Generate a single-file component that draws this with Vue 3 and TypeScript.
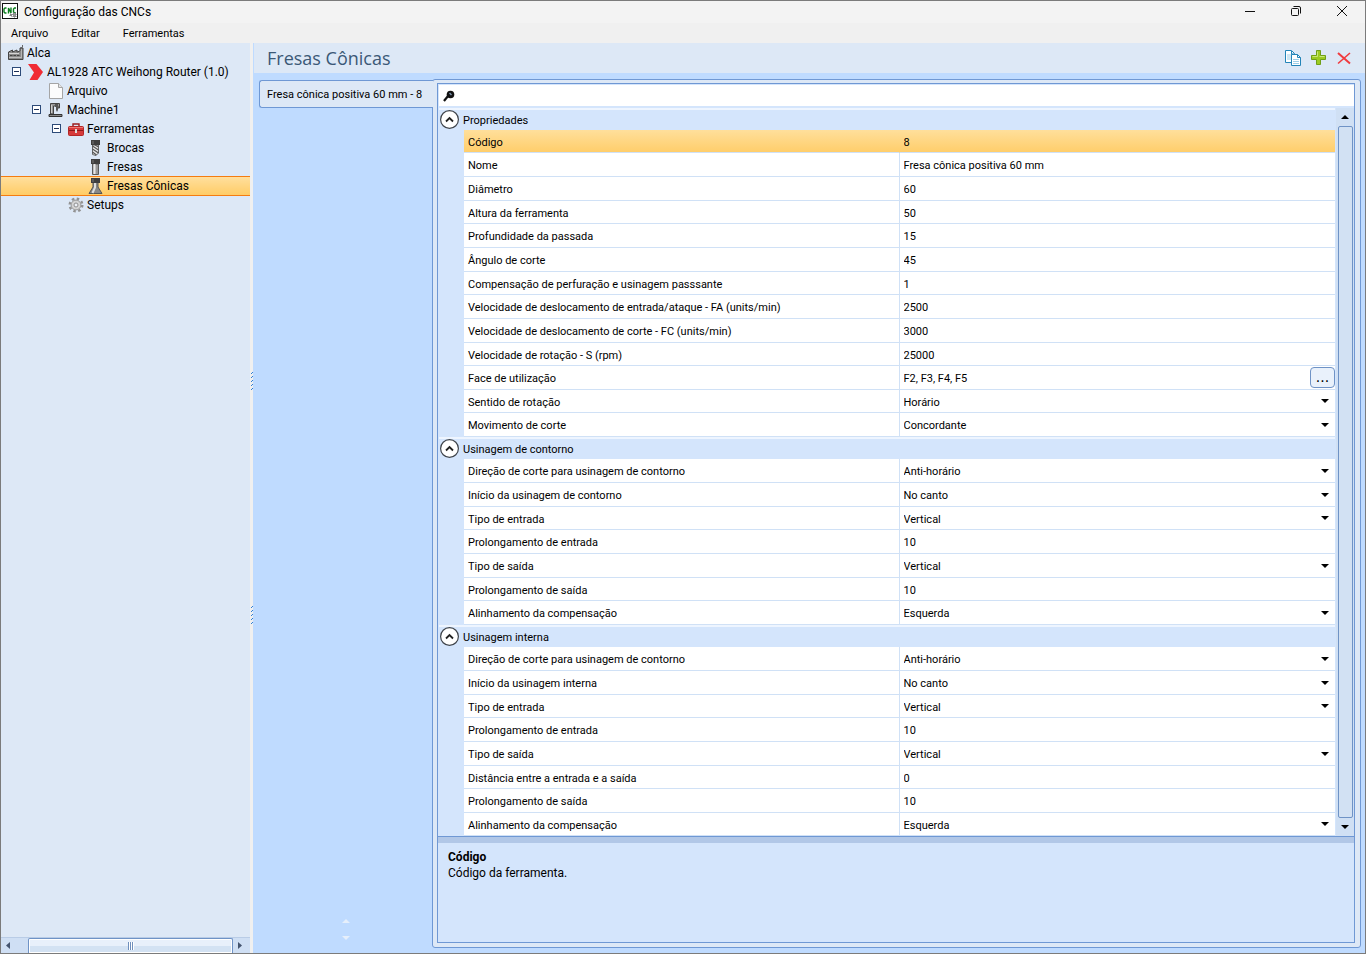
<script setup lang="ts">
import { ref } from 'vue'

interface Row {
  id: string
  label: string
  value: string
  kind?: 'select' | 'browse'
  short?: boolean
}
interface Group {
  title: string
  rows: Row[]
}
interface TreeNode {
  label: string
  icon: string
  level: number
  toggle?: boolean
}

const tree: TreeNode[] = [
  { label: 'Alca', icon: 'factory', level: 0 },
  { label: 'AL1928 ATC Weihong Router (1.0)', icon: 'brand', level: 1, toggle: true },
  { label: 'Arquivo', icon: 'file', level: 2 },
  { label: 'Machine1', icon: 'machine', level: 2, toggle: true },
  { label: 'Ferramentas', icon: 'toolbox', level: 3, toggle: true },
  { label: 'Brocas', icon: 'drill', level: 4 },
  { label: 'Fresas', icon: 'mill', level: 4 },
  { label: 'Fresas Cônicas', icon: 'cone', level: 4 },
  { label: 'Setups', icon: 'gear', level: 3 },
]

const selectedNode = ref(7)
const selectedRow = ref('codigo')

const groups = ref<Group[]>([
  {
    title: 'Propriedades',
    rows: [
      { id: 'codigo', label: 'Código', value: '8', short: true },
      { id: 'nome', label: 'Nome', value: 'Fresa cônica positiva 60 mm' },
      { id: 'diametro', label: 'Diâmetro', value: '60' },
      { id: 'altura', label: 'Altura da ferramenta', value: '50', short: true },
      { id: 'profundidade', label: 'Profundidade da passada', value: '15' },
      { id: 'angulo', label: 'Ângulo de corte', value: '45' },
      { id: 'compensacao', label: 'Compensação de perfuração e usinagem passsante', value: '1', short: true },
      { id: 'fa', label: 'Velocidade de deslocamento de entrada/ataque - FA (units/min)', value: '2500' },
      { id: 'fc', label: 'Velocidade de deslocamento de corte - FC (units/min)', value: '3000' },
      { id: 'rpm', label: 'Velocidade de rotação - S (rpm)', value: '25000', short: true },
      { id: 'face', label: 'Face de utilização', value: 'F2, F3, F4, F5', kind: 'browse' },
      { id: 'sentido', label: 'Sentido de rotação', value: 'Horário', kind: 'select', short: true },
      { id: 'movimento', label: 'Movimento de corte', value: 'Concordante', kind: 'select' },
    ],
  },
  {
    title: 'Usinagem de contorno',
    rows: [
      { id: 'c-direcao', label: 'Direção de corte para usinagem de contorno', value: 'Anti-horário', kind: 'select' },
      { id: 'c-inicio', label: 'Início da usinagem de contorno', value: 'No canto', kind: 'select' },
      { id: 'c-entrada', label: 'Tipo de entrada', value: 'Vertical', kind: 'select', short: true },
      { id: 'c-pentrada', label: 'Prolongamento de entrada', value: '10' },
      { id: 'c-saida', label: 'Tipo de saída', value: 'Vertical', kind: 'select' },
      { id: 'c-psaida', label: 'Prolongamento de saída', value: '10', short: true },
      { id: 'c-alinhamento', label: 'Alinhamento da compensação', value: 'Esquerda', kind: 'select' },
    ],
  },
  {
    title: 'Usinagem interna',
    rows: [
      { id: 'i-direcao', label: 'Direção de corte para usinagem de contorno', value: 'Anti-horário', kind: 'select' },
      { id: 'i-inicio', label: 'Início da usinagem interna', value: 'No canto', kind: 'select' },
      { id: 'i-entrada', label: 'Tipo de entrada', value: 'Vertical', kind: 'select', short: true },
      { id: 'i-pentrada', label: 'Prolongamento de entrada', value: '10' },
      { id: 'i-saida', label: 'Tipo de saída', value: 'Vertical', kind: 'select' },
      { id: 'i-distancia', label: 'Distância entre a entrada e a saída', value: '0', short: true },
      { id: 'i-psaida', label: 'Prolongamento de saída', value: '10' },
      { id: 'i-alinhamento', label: 'Alinhamento da compensação', value: 'Esquerda', kind: 'select', short: true },
    ],
  },
])
</script>

<template>
  <div class="window">
    <header class="titlebar">
      <svg class="app-icon" width="16" height="16" viewBox="0 0 16 16" aria-hidden="true">
        <rect x=".5" y=".5" width="15" height="15" fill="#fff" stroke="#111" />
        <path d="M4.500 5H3L2 6v3l1 1h1.500M6.500 10.500V5l2.500 5V4.500M14 5h-1.500l-1 1v3l1 1H14" fill="none" stroke="#0a7d1c" stroke-width="1.400" />
        <path d="M8 11h2v2H8zM11 10h3v4h-3z" fill="#999" stroke="#777" stroke-dasharray="1 1" />
      </svg>
      <span class="title">Configuração das CNCs</span>
      <div class="window-buttons">
        <button type="button" aria-label="Minimizar">
          <svg width="12" height="12" viewBox="0 0 12 12"><path d="M1 6.500h10" /></svg>
        </button>
        <button type="button" aria-label="Restaurar">
          <svg width="12" height="12" viewBox="0 0 12 12">
            <rect x="1.500" y="3.500" width="7" height="7" rx="1" />
            <path d="M3.500 1.500H9a1.500 1.500 0 0 1 1.500 1.500v5.500" />
          </svg>
        </button>
        <button type="button" aria-label="Fechar">
          <svg width="12" height="12" viewBox="0 0 12 12"><path d="M1 1l10 10M11 1L1 11" /></svg>
        </button>
      </div>
    </header>

    <nav class="menubar">
      <button type="button">Arquivo</button>
      <button type="button">Editar</button>
      <button type="button">Ferramentas</button>
    </nav>

    <div class="workspace">
      <aside class="sidebar">
        <ul class="tree" role="tree">
          <li
            v-for="(node, i) in tree"
            :key="node.label"
            role="treeitem"
            :aria-selected="selectedNode === i"
            :class="['node', 'level-' + node.level, { selected: selectedNode === i }]"
            @click="selectedNode = i"
          >
            <span class="toggle-slot">
              <button v-if="node.toggle" type="button" class="toggle" :aria-label="'Recolher ' + node.label">
                <svg width="9" height="9" viewBox="0 0 9 9">
                  <rect x=".5" y=".5" width="8" height="8" fill="#fff" stroke="#2c4a78" />
                  <path d="M2 4.500h5" stroke="#1b2f57" />
                </svg>
              </button>
            </span>
            <svg class="node-icon" width="16" height="16" viewBox="0 0 16 16" aria-hidden="true">
              <g v-if="node.icon === 'factory'">
                <path d="M.5 14.500V7L4.500 5v2L9 5v2l3-1V3h3v11.500z" fill="#8a8a8a" stroke="#444" />
                <path d="M1 8.500h10" stroke="#d5d5d5" />
                <path d="M2 10.500h2.500M5.500 10.500H8M9 10.500h2.500" stroke="#444" />
                <path d="M1 12.500h13" stroke="#bdbdbd" />
                <path d="M13.500 4v9" stroke="#b5b5b5" />
                <path d="M14.500 2V0M12.500 2.500h2" stroke="#666" />
              </g>
              <path v-else-if="node.icon === 'brand'" d="M0 0h8.500L15 8l-5.500 8H1.500l4.500-7.500z" fill="#f02c34" />
              <g v-else-if="node.icon === 'file'">
                <path d="M1.500.5h9l4 4v11h-13z" fill="#fcfcfc" stroke="#a5a5a5" />
                <path d="M10.500.5v4h4" fill="#e6e6e6" stroke="#a5a5a5" />
              </g>
              <g v-else-if="node.icon === 'machine'">
                <path d="M2.500 12V1.500h9V6H10V4H5.500v8z" fill="#999" stroke="#444" />
                <path d="M3.500 3v8" stroke="#ccc" />
                <path d="M7 2h3v6l-1 2-1-2V5H7z" fill="#555" />
                <path d="M1 12.500h13v2H1z" fill="#8a8a8a" stroke="#333" />
              </g>
              <g v-else-if="node.icon === 'toolbox'">
                <path d="M5 5.500V3h6v2.500" fill="none" stroke="#9b1c1c" stroke-width="1.400" />
                <rect x=".5" y="5.500" width="15" height="9" rx="1" fill="#d63a3a" stroke="#b32626" />
                <path d="M1 9.500h14" stroke="#8c1717" />
                <path d="M1 6.500h14" stroke="#ee7772" />
                <rect x="7" y="8" width="2" height="4" fill="#ddd" />
              </g>
              <g v-else-if="node.icon === 'drill'">
                <path d="M4.500 5h6v8L8 15.500l-3.500-1z" fill="#e6e6e6" stroke="#666" />
                <path d="M4.500 6l6 4M4.500 9l6 4M4.500 12l4 3M7 5l3.500 2" stroke="#555" stroke-width="1.100" />
                <path d="M3 0h9v5H3z" fill="#3f3f3f" />
                <path d="M5 1v3" stroke="#777" />
              </g>
              <g v-else-if="node.icon === 'mill'">
                <path d="M4.500 5h6v10.500h-6z" fill="#999" stroke="#5a5a5a" />
                <path d="M6.500 5v10" stroke="#e8e8e8" stroke-width="2" />
                <path d="M3 0h9v5H3z" fill="#3f3f3f" />
                <path d="M5 1v3" stroke="#777" />
              </g>
              <g v-else-if="node.icon === 'cone'">
                <path d="M5 4h5v5l4 6.500H1L5 9z" fill="#888" stroke="#555" />
                <path d="M7 5v4.500L4.500 15" stroke="#dedede" stroke-width="2" fill="none" />
                <path d="M3 0h9v5H3z" fill="#3f3f3f" />
                <path d="M5 1v3" stroke="#777" />
              </g>
              <g v-else fill="none">
                <circle cx="8" cy="8" r="6.300" stroke="#929292" stroke-width="2.400" stroke-dasharray="2.474 2.474" />
                <circle cx="8" cy="8" r="4.900" fill="#d4d4d4" stroke="#9a9a9a" />
                <circle cx="8" cy="8" r="2" fill="#eef2f8" stroke="#8f8f8f" />
              </g>
            </svg>
            <span class="node-label">{{ node.label }}</span>
          </li>
        </ul>
        <div class="hscroll">
          <button type="button" class="hs-arrow" aria-label="Rolar à esquerda">
            <svg width="4" height="7" viewBox="0 0 4 7"><path d="M4 0v7L0 3.500z" fill="#44546f" /></svg>
          </button>
          <div class="hs-thumb"><i></i><i></i><i></i></div>
          <button type="button" class="hs-arrow right" aria-label="Rolar à direita">
            <svg width="4" height="7" viewBox="0 0 4 7"><path d="M0 0v7l4-3.500z" fill="#44546f" /></svg>
          </button>
        </div>
      </aside>

      <div class="splitter">
        <svg v-for="n in 2" :key="n" width="3" height="19" viewBox="0 0 3 19" aria-hidden="true">
          <path
            v-for="k in 5"
            :key="k"
            :d="`M1 ${k * 4 - 3}h1v1h-1zM2 ${k * 4 - 4}h1v1h-1z`"
            fill="#2f7fd8"
          />
        </svg>
      </div>

      <main class="content">
        <div class="content-head">
          <h1>Fresas Cônicas</h1>
          <div class="tools">
            <button type="button" aria-label="Copiar">
              <svg width="17" height="16" viewBox="0 0 17 16">
                <path d="M.5.500h6l3 3v9h-9z" fill="#fff" stroke="#2384b8" />
                <path d="M2 5h5M2 7h5M2 9h5" stroke="#9fcfe8" />
                <path d="M6.500 4.500h6l3 3v8h-9z" fill="#fff" stroke="#2384b8" />
                <path d="M12.500 4.500v3h3M6.500 1v3h3" fill="none" stroke="#2384b8" />
                <path d="M8 9.500h6M8 11.500h6M8 13.500h6" stroke="#9fcfe8" />
              </svg>
            </button>
            <button type="button" aria-label="Adicionar">
              <svg width="16" height="16" viewBox="0 0 16 16">
                <path d="M5.500.5h4v5h5v4h-5v5h-4v-5h-5v-4h5z" fill="#9ccb22" stroke="#6f9f17" />
                <path d="M6.500 1.500v5h-5M8.500 6.500h5" fill="none" stroke="#c9e77a" />
              </svg>
            </button>
            <button type="button" aria-label="Excluir">
              <svg width="16" height="16" viewBox="0 0 16 16">
                <path d="M2 3l12 10.500" stroke="#f03a3e" stroke-width="2" />
                <path d="M14 3L2 13.500" stroke="#f03a3e" stroke-width="1.600" />
              </svg>
            </button>
          </div>
        </div>

        <div class="editor">
          <div class="tabs">
            <button type="button" class="tab">Fresa cônica positiva 60 mm - 8</button>
            <div class="tab-scroll">
              <button type="button" aria-label="Aba anterior">
                <svg width="8" height="4" viewBox="0 0 8 4"><path d="M0 4l4-4 4 4z" fill="#e6effb" /></svg>
              </button>
              <button type="button" aria-label="Próxima aba">
                <svg width="8" height="4" viewBox="0 0 8 4"><path d="M0 0h8L4 4z" fill="#e6effb" /></svg>
              </button>
            </div>
          </div>

          <section class="panel">
            <div class="panel-inner">
              <label class="search">
                <svg width="12" height="12" viewBox="0 0 12 12" aria-hidden="true">
                  <path d="M1 11l4-5" stroke="#111" stroke-width="2.200" />
                  <circle cx="7.500" cy="4.500" r="3.800" fill="#111" />
                  <path d="M6.500 3l2 2" stroke="#7c93ad" stroke-width="1.400" />
                </svg>
                <input type="text" aria-label="Pesquisar" />
              </label>

              <div class="grid-area">
                <div class="grids">
                  <section v-for="group in groups" :key="group.title" class="group">
                    <div class="group-head">
                      <button type="button" class="collapse" :aria-label="'Recolher ' + group.title">
                        <svg width="19" height="19" viewBox="0 0 19 19">
                          <circle cx="9.500" cy="9.500" r="8.900" fill="#fff" stroke="#3f444b" stroke-width="1.200" />
                          <path d="M6 11.500l3.500-3.500 3.500 3.500" fill="none" stroke="#222" stroke-width="1.800" />
                        </svg>
                      </button>
                      <h2>{{ group.title }}</h2>
                    </div>
                    <table>
                      <tbody>
                        <tr
                          v-for="row in group.rows"
                          :key="row.id"
                          :class="{ short: row.short, active: selectedRow === row.id }"
                          @click="selectedRow = row.id"
                        >
                          <th scope="row"><label :for="row.id">{{ row.label }}</label></th>
                          <td>
                            <div v-if="row.kind === 'select'" class="field drop">
                              <select :id="row.id" v-model="row.value">
                                <option>{{ row.value }}</option>
                              </select>
                            </div>
                            <div v-else class="field">
                              <input :id="row.id" v-model="row.value" type="text" />
                              <button v-if="row.kind === 'browse'" type="button" class="browse">...</button>
                            </div>
                          </td>
                        </tr>
                      </tbody>
                    </table>
                  </section>
                </div>
                <div class="vscroll">
                  <button type="button" aria-label="Rolar para cima">
                    <svg width="8" height="4" viewBox="0 0 8 4"><path d="M0 4l4-4 4 4z" /></svg>
                  </button>
                  <div class="vs-thumb"></div>
                  <button type="button" aria-label="Rolar para baixo">
                    <svg width="8" height="4" viewBox="0 0 8 4"><path d="M0 0h8L4 4z" /></svg>
                  </button>
                </div>
              </div>

              <div class="details">
                <h3>Código</h3>
                <p>Código da ferramenta.</p>
              </div>
            </div>
          </section>
        </div>
      </main>
    </div>
  </div>
</template>

<style>
body {
  background: #bfdbff;
}
</style>

<style scoped>
* {
  box-sizing: border-box;
}
.window {
  display: flex;
  flex-direction: column;
  min-height: 100vh;
  border: 1px solid #7b7b7b;
  font-family: Roboto, 'Open Sans', sans-serif;
  font-size: 12px;
  color: #000;
}
button {
  font: inherit;
  color: inherit;
  background: none;
  border: 0;
  padding: 0;
}
svg {
  display: block;
  flex: none;
}
h1,
h2,
h3,
p {
  margin: 0;
  font-weight: 400;
}
.titlebar {
  display: flex;
  align-items: center;
  height: 22px;
  padding: 0 0 0 1px;
  background: #f3f3f3;
}
.title {
  margin-left: 6px;
}
.app-icon {
  margin-bottom: 2px;
}
.window-buttons {
  display: flex;
  margin: 0 0 2px auto;
}
.window-buttons button {
  display: flex;
  justify-content: center;
  align-items: center;
  width: 46px;
  height: 20px;
}
.window-buttons svg {
  fill: none;
  stroke: #111;
}
.menubar {
  display: flex;
  gap: 23px;
  height: 20px;
  padding: 0 10px;
  background: #f0f0f0;
  font-size: 11px;
}
.workspace {
  display: flex;
  flex: 1;
}
.sidebar {
  display: flex;
  flex-direction: column;
  flex: none;
  width: 249px;
  background: #dde8f6;
}
.tree {
  flex: 1;
  margin: 0;
  padding: 0;
  list-style: none;
}
.node {
  display: flex;
  align-items: center;
  height: 19px;
  white-space: nowrap;
  cursor: default;
}
.level-1 { padding-left: 8px; }
.level-2 { padding-left: 28px; }
.level-3 { padding-left: 48px; }
.level-4 { padding-left: 68px; }
.toggle-slot {
  width: 19px;
  padding-left: 3px;
}
.level-0 .toggle-slot {
  width: 7px;
}
.toggle {
  display: block;
}
.node-label {
  margin-left: 3px;
}
.node.selected {
  background: linear-gradient(#ffe0a0, #ffcc66);
  box-shadow: inset 0 1px #f57c10, 0 1px #f57c10;
}
.hscroll {
  display: flex;
  height: 16px;
  background: #cfdff4;
  border-top: 1px solid #b9cce6;
}
.hs-arrow {
  display: flex;
  align-items: center;
  width: 27px;
  padding-left: 5px;
}
.hs-arrow.right {
  width: 17px;
}
.hs-thumb {
  display: flex;
  flex: 1;
  justify-content: center;
  align-items: center;
  gap: 1px;
  border: 1px solid #6f93c6;
  border-bottom: 0;
  border-radius: 2px 2px 0 0;
  background: linear-gradient(#e8f0fb 50%, #d3e2f3 50%);
  box-shadow: inset 0 0 0 1px #fff;
}
.hs-thumb i {
  width: 1px;
  height: 8px;
  background: #6f8fbd;
  box-shadow: 1px 0 #fff;
}
.splitter {
  display: flex;
  flex-direction: column;
  justify-content: center;
  gap: 215px;
  flex: none;
  width: 3px;
  background: #f0f0f0;
}
.content {
  display: flex;
  flex-direction: column;
  flex: 1;
  min-width: 0;
  padding-left: 1px;
  background: #bfdbff;
}
.content-head {
  display: flex;
  align-items: center;
  justify-content: space-between;
  height: 30px;
  padding: 0 13px;
  background: #dde8f6;
}
h1 {
  font-family: 'Open Sans', sans-serif;
  font-size: 18px;
  color: #3b5876;
}
.tools {
  display: flex;
  gap: 9px;
}
.editor {
  display: flex;
  flex: 1;
  padding: 6px 4px 5px 5px;
}
.tabs {
  display: flex;
  flex-direction: column;
  flex: none;
  width: 173px;
  padding-top: 1px;
}
.tab {
  position: relative;
  z-index: 1;
  height: 28px;
  margin-right: -1px;
  padding-left: 7px;
  border: 1px solid #6f98d4;
  border-right: 0;
  border-radius: 3px 0 0 3px;
  background: #dde8f6;
  font-size: 11px;
  text-align: left;
  white-space: nowrap;
}
.tab-scroll {
  display: flex;
  flex-direction: column;
  align-items: center;
  gap: 13px;
  margin-top: auto;
  padding-bottom: 8px;
}
.panel {
  display: flex;
  flex: 1;
  min-width: 0;
  padding: 3px 5px 4px 4px;
  border: 1px solid #6f98d4;
  border-radius: 3px;
  background: #dde8f6;
}
.panel-inner {
  display: flex;
  flex-direction: column;
  flex: 1;
  min-width: 0;
  border: 1px solid #6f98d4;
  background: #d4e5fc;
}
.search {
  display: flex;
  align-items: center;
  height: 21px;
  margin: 1px 0 2px 1px;
  padding-left: 4px;
  background: #fff;
}
.search input {
  flex: 1;
  border: 0;
  outline: 0;
  font: inherit;
}
.grid-area {
  display: flex;
}
.grids {
  flex: 1;
  min-width: 0;
  padding-left: 1px;
}
.group {
  border-top: 2px solid #eef5ff;
}
.group-head {
  display: flex;
  align-items: center;
  height: 20px;
  gap: 4px;
  padding: 0 0 2px 1px;
}
h2 {
  padding-top: 2px;
  font-size: 11px;
}
table {
  width: calc(100% - 25px);
  margin-left: 25px;
  border-collapse: separate;
  border-spacing: 0;
  table-layout: fixed;
  background: #fff;
  font-size: 11px;
}
tr {
  height: 24px;
}
tr.short {
  height: 23px;
}
th,
td {
  padding: 0 0 0 4px;
  border-bottom: 1px solid #d0e1f6;
  font-weight: 400;
  text-align: left;
  white-space: nowrap;
  line-height: 15px;
}
th {
  padding-top: 2px;
  border-right: 1px solid #d0e1f6;
}
tr.active {
  background: linear-gradient(#ffdf9b, #ffcd69);
}
tr.active th {
  border-right-color: transparent;
}
.field {
  display: flex;
  align-items: center;
  height: 22px;
}
.field input,
.field select {
  flex: 1;
  min-width: 0;
  height: 20px;
  padding: 2px 0 0;
  border: 0;
  outline: 0;
  background: transparent;
  appearance: none;
  font: inherit;
  color: inherit;
}
.drop::after {
  content: '';
  margin-right: 6px;
  border: 4px solid transparent;
  border-top-color: #000;
  border-bottom: 0;
}
.browse {
  width: 25px;
  height: 21px;
  border: 1px solid #6f93c6;
  border-radius: 4px;
  background: #e9f1fb;
  font-family: 'DejaVu Sans', sans-serif;
  font-size: 14px;
  line-height: 19px;
}
.vscroll {
  display: flex;
  flex-direction: column;
  align-items: center;
  width: 18px;
  margin-left: 1px;
  background: #d0e0f4;
}
.vscroll button {
  display: flex;
  justify-content: center;
  align-items: center;
  width: 16px;
  height: 18px;
}
.vs-thumb {
  flex: 1;
  width: 15px;
  border: 1px solid #6f93c6;
  border-radius: 2px;
  background: #d2e1f3;
}
.details {
  flex: 1;
  padding: 12px 10px 6px;
  border-top: 1px solid #6f98d4;
  box-shadow: inset 0 6px #b1c7e7;
}
h3 {
  font-size: 12px;
  font-weight: 700;
  line-height: 16px;
}
.details p {
  line-height: 16px;
}
</style>
